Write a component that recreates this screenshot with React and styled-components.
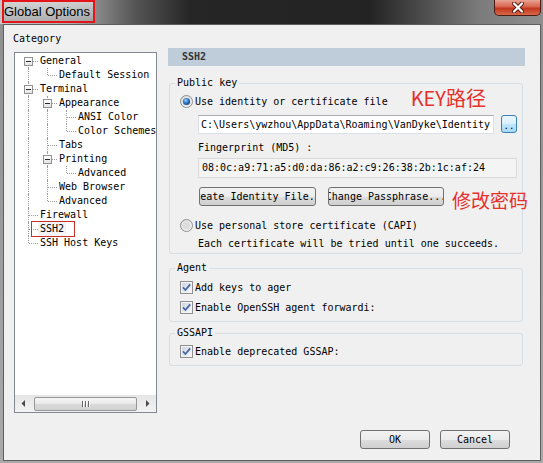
import React from 'react'
import styled, { createGlobalStyle, css } from 'styled-components'

const GlobalStyle = createGlobalStyle`
  html, body {
    margin: 0;
    padding: 0;
    background: #fff;
  }
  body {
    font-family: "DejaVu Sans Mono", "Liberation Mono", monospace;
    font-size: 10px;
    color: #000;
  }
`

const cjk = `"Noto Sans CJK SC", "Noto Sans", sans-serif`

const Window = styled.div`
  width: 543px;
  height: 463px;
  display: flex;
  flex-direction: column;
  background: linear-gradient(180deg, #8e8e8e 0%, #a9a9a9 100%);
  overflow: hidden;
`

const TitleBar = styled.div`
  height: 24px;
  flex: none;
  display: flex;
  justify-content: space-between;
  align-items: flex-start;
  background: linear-gradient(90deg, #c6c6c6 0, #adadad 70px, #555 135px, #262626 190px, #232323 370px, #4a4a4a 420px, #7c7c7c 480px, #8e8e8e 543px);
`

const TitleBox = styled.div`
  margin-left: 2px;
  width: 93px;
  height: 23px;
  box-sizing: border-box;
  border: 2px solid #e4141b;
  background: linear-gradient(180deg, rgba(215, 215, 215, 0.85), rgba(170, 170, 170, 0.7));
  font-family: "Liberation Sans", Arial, sans-serif;
  font-size: 13px;
  line-height: 19px;
  white-space: nowrap;
  color: #000;
`

const CloseButton = styled.div`
  margin-right: 2px;
  width: 47px;
  height: 16px;
  box-sizing: border-box;
  border: 1px solid #4e1a14;
  border-top: none;
  border-radius: 0 0 5px 5px;
  background: linear-gradient(180deg, #e8a496 0%, #d8634b 45%, #c2361e 55%, #d6694a 100%);
  display: flex;
  align-items: center;
  justify-content: center;
`

const Body = styled.div`
  flex: 1;
  margin: 0 2px 2px 3px;
  background: #f0f0f0;
  border: 1px solid #5e5e5e;
  display: flex;
  flex-direction: column;
  padding: 8px 14px 11px 10px;
`

const Main = styled.div`
  display: grid;
  grid-template-columns: 143px 357px;
  column-gap: 11px;
  align-items: start;
`

const Caption = styled.div`
  margin-left: -1px;
  line-height: 12px;
  height: 12px;
`

const TreeBox = styled.div`
  margin-top: 7px;
  height: 361px;
  box-sizing: border-box;
  border: 1px solid #828790;
  background: #fff;
  display: flex;
  flex-direction: column;
`

const TreeList = styled.div`
  flex: 1;
  padding: 1px 0 0 4px;
  overflow: hidden;
`

const TreeRow = styled.div`
  display: flex;
  height: 14px;
`

const dotted = '1px dotted #9a9a9a'

const Guide = styled.div`
  width: 19px;
  flex: none;
  position: relative;
  ${({ $line }) => $line && css`
    &::before {
      content: '';
      position: absolute;
      left: 9px;
      top: 0;
      bottom: 0;
      border-left: ${dotted};
    }
  `}
`

const Joint = styled.div`
  width: 19px;
  flex: none;
  position: relative;
  &::before {
    content: '';
    position: absolute;
    left: 9px;
    top: ${({ $first }) => ($first ? '7px' : '0')};
    bottom: ${({ $last }) => ($last ? '7px' : '0')};
    border-left: ${dotted};
  }
  &::after {
    content: '';
    position: absolute;
    left: 10px;
    right: 0;
    top: 7px;
    border-top: ${dotted};
  }
`

const Expander = styled.span`
  position: absolute;
  z-index: 1;
  left: 5px;
  top: 3px;
  width: 9px;
  height: 9px;
  box-sizing: border-box;
  border: 1px solid #919191;
  background: linear-gradient(180deg, #fff 0%, #e4e4e4 100%);
  display: flex;
  align-items: center;
  justify-content: center;
  &::before {
    content: '';
    width: 5px;
    height: 1px;
    background: #2b2b2b;
  }
`

const NodeLabel = styled.span`
  padding: 0 2px;
  line-height: 14px;
  white-space: nowrap;
  position: relative;
  ${({ $selected }) => $selected && css`
    background: #f4f4f4;
    &::after {
      content: '';
      position: absolute;
      left: -7px;
      right: -9px;
      top: -1px;
      bottom: -1px;
      border: 1px solid #c9302c;
    }
  `}
`

const HScroll = styled.div`
  height: 17px;
  flex: none;
  display: flex;
  background: linear-gradient(180deg, #e6e6e6 0%, #f2f2f2 100%);
`

const ScrollArrow = styled.div`
  width: 17px;
  flex: none;
  display: flex;
  align-items: center;
  justify-content: center;
`

const ScrollTrack = styled.div`
  flex: 1;
  display: flex;
  align-items: center;
`

const Thumb = styled.div`
  margin-left: 2px;
  width: 103px;
  height: 14px;
  box-sizing: border-box;
  border: 1px solid #979797;
  border-radius: 2px;
  background: linear-gradient(180deg, #f6f6f6 0%, #e9e9e9 50%, #d9d9d9 51%, #d2d2d2 100%);
  display: flex;
  align-items: center;
  justify-content: center;
  gap: 1px;
`

const Grip = styled.span`
  width: 1px;
  height: 6px;
  background: #666;
  box-shadow: 1px 0 0 #fff;
  margin-right: 1px;
`

const RightPane = styled.div`
  margin-top: 15px;
  display: flex;
  flex-direction: column;
`

const PageHeader = styled.div`
  height: 18px;
  background: #bfcddb;
  padding-left: 14px;
  font-weight: bold;
  line-height: 18px;
  color: #333;
`

const Group = styled.fieldset`
  margin: ${({ $mt }) => $mt}px 2px 0 1px;
  padding: ${({ $pt }) => $pt}px 5px ${({ $pb }) => $pb}px 10px;
  border: 1px solid #d5dfe5;
  border-radius: 3px;
  min-width: 0;
  display: flex;
  flex-direction: column;
`

const Legend = styled.legend`
  margin-left: -5px;
  padding: 0 2px;
  line-height: 12px;
  font-size: 10px;
`

const Line = styled.div`
  display: flex;
  align-items: center;
  height: ${({ $h }) => $h || 14}px;
  gap: 2px;
  margin-top: ${({ $mt }) => $mt || 0}px;
  margin-left: ${({ $indent }) => $indent || 0}px;
  white-space: nowrap;
`

const Note = styled.span`
  flex: none;
  font-family: ${cjk};
  color: #e5302c;
  font-size: ${({ $size }) => $size}px;
  line-height: 20px;
  white-space: nowrap;
  margin-left: ${({ $ml }) => $ml}px;
  margin-top: ${({ $mtop }) => $mtop || 0}px;
  margin-bottom: ${({ $mb }) => $mb || 0}px;
`

const PathRow = styled.div`
  display: flex;
  gap: 7px;
  margin: 7px 0 0 18px;
  height: 19px;
`

const TextField = styled.div`
  width: 296px;
  height: 19px;
  box-sizing: border-box;
  border: 1px solid #dbdfe6;
  border-top-color: #abadb3;
  background: #fff;
  padding-left: 2px;
  line-height: 17px;
  white-space: nowrap;
  overflow: hidden;
`

const BrowseButton = styled.div`
  width: 16px;
  height: 18px;
  box-sizing: border-box;
  border: 1px solid #3c7fb1;
  border-radius: 3px;
  background: linear-gradient(180deg, #eaf6fd 0%, #d9f0fc 50%, #bee6fd 51%, #a7d9f5 100%);
  display: flex;
  align-items: flex-end;
  justify-content: center;
  line-height: 12px;
  font-size: 9px;
`

const ReadOnlyField = styled.div`
  margin: 4px 0 0 18px;
  height: 20px;
  box-sizing: border-box;
  border: 1px solid #d9d9d9;
  background: #f4f4f4;
  padding-left: 3px;
  line-height: 18px;
  white-space: nowrap;
`

const ButtonRow = styled.div`
  display: flex;
  align-items: flex-start;
  gap: 12px;
  height: 19px;
  margin: 9px 0 0 19px;
`

const PushButton = styled.div`
  flex: none;
  width: ${({ $w }) => $w}px;
  height: 19px;
  box-sizing: border-box;
  border: 1px solid #707070;
  border-radius: 3px;
  background: linear-gradient(180deg, #f2f2f2 0%, #ebebeb 50%, #dddddd 51%, #cfcfcf 100%);
  display: flex;
  justify-content: center;
  align-items: center;
  overflow: hidden;
  white-space: nowrap;
  line-height: 17px;
`

const Footer = styled.div`
  margin-top: auto;
  display: flex;
  justify-content: flex-end;
  gap: 10px;
  padding-right: 16px;
`

const Radio = ({ checked }) => (
  <svg width="13" height="13" viewBox="0 0 13 13">
    <defs>
      <linearGradient id={checked ? 'rb1' : 'rb0'} x1="0" y1="0" x2="1" y2="1">
        <stop offset="0" stopColor="#d0d0d0" />
        <stop offset="1" stopColor="#fafafa" />
      </linearGradient>
      <radialGradient id="rdot" cx="0.4" cy="0.35" r="0.7">
        <stop offset="0" stopColor="#9fd3ff" />
        <stop offset="0.5" stopColor="#2f7cc9" />
        <stop offset="1" stopColor="#17406f" />
      </radialGradient>
    </defs>
    <circle cx="6.5" cy="6.5" r="6" fill={`url(#${checked ? 'rb1' : 'rb0'})`} stroke="#8e8f8f" />
    <circle cx="6.5" cy="6.5" r="4.5" fill="none" stroke="#e9e9e9" />
    {checked ? <circle cx="6.5" cy="6.5" r="3.6" fill="url(#rdot)" /> : <circle cx="6.5" cy="6.5" r="3.6" fill="#dcdcdc" />}
  </svg>
)

const Check = () => (
  <svg width="13" height="13" viewBox="0 0 13 13">
    <defs>
      <linearGradient id="cbg" x1="0" y1="0" x2="1" y2="1">
        <stop offset="0" stopColor="#cfd6df" />
        <stop offset="1" stopColor="#f4f6f8" />
      </linearGradient>
    </defs>
    <rect x="0.5" y="0.5" width="12" height="12" fill="#f4f4f4" stroke="#8f8f8f" />
    <rect x="2" y="2" width="9" height="9" fill="url(#cbg)" />
    <path d="M3 6.4 L5.4 9 L10.2 3.4" fill="none" stroke="#4867a8" strokeWidth="1.8" />
  </svg>
)

const Arrow = ({ dir }) => (
  <svg width="5" height="7" viewBox="0 0 5 7">
    <polygon points={dir === 'left' ? '4,0 4,7 0.5,3.5' : '1,0 1,7 4.5,3.5'} fill="#4a4a4a" />
  </svg>
)

const tree = [
  { label: 'General', children: [{ label: 'Default Session' }] },
  {
    label: 'Terminal',
    children: [
      { label: 'Appearance', children: [{ label: 'ANSI Color' }, { label: 'Color Schemes' }] },
      { label: 'Tabs' },
      { label: 'Printing', children: [{ label: 'Advanced' }] },
      { label: 'Web Browser' },
      { label: 'Advanced' },
    ],
  },
  { label: 'Firewall' },
  { label: 'SSH2', selected: true },
  { label: 'SSH Host Keys' },
]

const flatten = (nodes, guides = [], out = []) => {
  nodes.forEach((node, i) => {
    const last = i === nodes.length - 1
    out.push({
      label: node.label,
      selected: node.selected,
      guides,
      first: guides.length === 0 && i === 0,
      last,
      open: !!node.children,
    })
    if (node.children) flatten(node.children, [...guides, !last], out)
  })
  return out
}

const rows = flatten(tree)

const Tree = () => (
  <TreeBox>
    <TreeList>
      {rows.map((row, idx) => (
        <TreeRow key={idx}>
          {row.guides.map((line, g) => <Guide key={g} $line={line} />)}
          <Joint $first={row.first} $last={row.last}>
            {row.open && <Expander />}
          </Joint>
          <NodeLabel $selected={row.selected}>{row.label}</NodeLabel>
        </TreeRow>
      ))}
    </TreeList>
    <HScroll>
      <ScrollArrow><Arrow dir="left" /></ScrollArrow>
      <ScrollTrack>
        <Thumb><Grip /><Grip /><Grip /></Thumb>
      </ScrollTrack>
      <ScrollArrow><Arrow dir="right" /></ScrollArrow>
    </HScroll>
  </TreeBox>
)

export default function App() {
  return (
    <>
      <GlobalStyle />
      <Window>
        <TitleBar>
          <TitleBox>Global Options</TitleBox>
          <CloseButton>
            <svg width="14" height="11" viewBox="0 0 14 11">
              <path d="M3 1.5 L11 9.5 M11 1.5 L3 9.5" stroke="#5a1a10" strokeWidth="4" strokeLinecap="round" />
              <path d="M3 1.5 L11 9.5 M11 1.5 L3 9.5" stroke="#fff" strokeWidth="2.2" strokeLinecap="round" />
            </svg>
          </CloseButton>
        </TitleBar>
        <Body>
          <Main>
            <div>
              <Caption>Category</Caption>
              <Tree />
            </div>
            <RightPane>
              <PageHeader>SSH2</PageHeader>

              <Group $mt={11} $pt={5} $pb={3}>
                <Legend>Public key</Legend>
                <Line>
                  <Radio checked />
                  <span>Use identity or certificate file</span>
                  <Note $size={20} $ml={21} $mb={6}>KEY路径</Note>
                </Line>
                <PathRow>
                  <TextField>C:\Users\ywzhou\AppData\Roaming\VanDyke\Identity</TextField>
                  <BrowseButton>..</BrowseButton>
                </PathRow>
                <Line $mt={6} $indent={18}>Fingerprint (MD5) :</Line>
                <ReadOnlyField>08:0c:a9:71:a5:d0:da:86:a2:c9:26:38:2b:1c:af:24</ReadOnlyField>
                <ButtonRow>
                  <PushButton $w={117}>Create Identity File...</PushButton>
                  <PushButton $w={116}>Change Passphrase...</PushButton>
                  <Note $size={19} $ml={-4} $mtop={3}>修改密码</Note>
                </ButtonRow>
                <Line $mt={12}>
                  <Radio />
                  <span>Use personal store certificate (CAPI)</span>
                </Line>
                <Line $mt={4} $indent={18}>Each certificate will be tried until one succeeds.</Line>
              </Group>

              <Group $mt={8} $pt={6} $pb={7}>
                <Legend>Agent</Legend>
                <Line>
                  <Check />
                  <span>Add keys to ager</span>
                </Line>
                <Line $mt={6}>
                  <Check />
                  <span>Enable OpenSSH agent forwardi:</span>
                </Line>
              </Group>

              <Group $mt={5} $pt={5} $pb={7}>
                <Legend>GSSAPI</Legend>
                <Line>
                  <Check />
                  <span>Enable deprecated GSSAP:</span>
                </Line>
              </Group>
            </RightPane>
          </Main>
          <Footer>
            <PushButton $w={70}>OK</PushButton>
            <PushButton $w={70}>Cancel</PushButton>
          </Footer>
        </Body>
      </Window>
    </>
  )
}
